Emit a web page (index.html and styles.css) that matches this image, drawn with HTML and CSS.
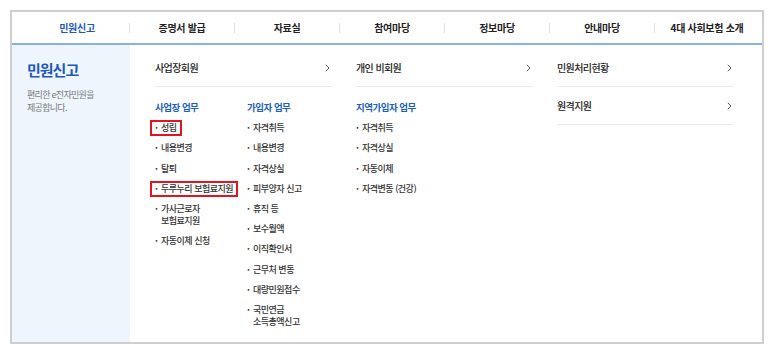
FILE: index.html
```html
<!DOCTYPE html>
<html lang="ko">
<head>
<meta charset="utf-8">
<title>민원신고</title>
<link rel="stylesheet" href="styles.css">
</head>
<body>
<div class="frame">
  <nav class="gnb">
    <a class="gnb-item active">민원신고</a><span class="sep"></span>
    <a class="gnb-item">증명서 발급</a><span class="sep"></span>
    <a class="gnb-item">자료실</a><span class="sep"></span>
    <a class="gnb-item">참여마당</a><span class="sep"></span>
    <a class="gnb-item">정보마당</a><span class="sep"></span>
    <a class="gnb-item">안내마당</a><span class="sep"></span>
    <a class="gnb-item">4대 사회보험 소개</a>
  </nav>
  <div class="content">
    <aside class="side">
      <h2 class="side-title">민원신고</h2>
      <p class="side-desc">편리한 e전자민원을<br>제공합니다.</p>
    </aside>
    <div class="main">
      <div class="col">
        <a class="row"><span>사업장회원</span><svg class="chev" viewBox="0 0 5 8" width="5" height="8"><polyline points="0.8,0.8 4,4 0.8,7.2" fill="none" stroke="#555" stroke-width="1"/></svg></a>
        <div class="subs">
          <div class="sub">
            <h3 class="sub-title">사업장 업무</h3>
            <ul class="list">
              <li><span class="hl"><span class="dot">·</span><span>성립</span></span></li>
              <li><span class="dot">·</span><span>내용변경</span></li>
              <li><span class="dot">·</span><span>탈퇴</span></li>
              <li><span class="hl"><span class="dot">·</span><span>두루누리 보험료지원</span></span></li>
              <li><span class="dot">·</span><span>가사근로자<br>보험료지원</span></li>
              <li><span class="dot">·</span><span>자동이체 신청</span></li>
            </ul>
          </div>
          <div class="sub">
            <h3 class="sub-title">가입자 업무</h3>
            <ul class="list">
              <li><span class="dot">·</span><span>자격취득</span></li>
              <li><span class="dot">·</span><span>내용변경</span></li>
              <li><span class="dot">·</span><span>자격상실</span></li>
              <li><span class="dot">·</span><span>피부양자 신고</span></li>
              <li><span class="dot">·</span><span>휴직 등</span></li>
              <li><span class="dot">·</span><span>보수월액</span></li>
              <li><span class="dot">·</span><span>이직확인서</span></li>
              <li><span class="dot">·</span><span>근무처 변동</span></li>
              <li><span class="dot">·</span><span>대량민원접수</span></li>
              <li><span class="dot">·</span><span>국민연금<br>소득총액신고</span></li>
            </ul>
          </div>
        </div>
      </div>
      <div class="col">
        <a class="row"><span>개인 비회원</span><svg class="chev" viewBox="0 0 5 8" width="5" height="8"><polyline points="0.8,0.8 4,4 0.8,7.2" fill="none" stroke="#555" stroke-width="1"/></svg></a>
        <div class="subs">
          <div class="sub">
            <h3 class="sub-title">지역가입자 업무</h3>
            <ul class="list">
              <li><span class="dot">·</span><span>자격취득</span></li>
              <li><span class="dot">·</span><span>자격상실</span></li>
              <li><span class="dot">·</span><span>자동이체</span></li>
              <li><span class="dot">·</span><span>자격변동 (건강)</span></li>
            </ul>
          </div>
        </div>
      </div>
      <div class="col">
        <a class="row"><span>민원처리현황</span><svg class="chev" viewBox="0 0 5 8" width="5" height="8"><polyline points="0.8,0.8 4,4 0.8,7.2" fill="none" stroke="#555" stroke-width="1"/></svg></a>
        <a class="row"><span>원격지원</span><svg class="chev" viewBox="0 0 5 8" width="5" height="8"><polyline points="0.8,0.8 4,4 0.8,7.2" fill="none" stroke="#555" stroke-width="1"/></svg></a>
      </div>
    </div>
  </div>
</div>
</body>
</html>
```
FILE: styles.css
```css
* { box-sizing: border-box; }
html, body { margin: 0; padding: 0; background: #fff; }
body {
  font-family: "Noto Sans CJK KR", "Noto Sans", sans-serif;
  color: #333;
}
.frame {
  margin: 10px;
  width: 754px;
  height: 334px;
  border: 2px solid #cfcfcf;
  display: flex;
  flex-direction: column;
}
.gnb {
  height: 33px;
  flex: none;
  display: flex;
  align-items: center;
  padding-left: 13px;
  border-bottom: 2px solid #86b4de;
}
.gnb-item {
  width: 104px;
  text-align: center;
  font-size: 10px;
  font-weight: 700;
  letter-spacing: -0.3px;
  color: #222;
  line-height: 14px;
}
.gnb-item.active { color: #1a58c2; }
.sep {
  width: 1px;
  height: 10px;
  background: #e2e2e2;
}
.content {
  flex: 1;
  display: flex;
  min-height: 0;
}
.side {
  width: 118px;
  flex: none;
  background: #eef5fc;
  padding: 15px 0 0 15px;
}
.side-title {
  margin: 0;
  font-size: 15px;
  line-height: 20px;
  font-weight: 700;
  letter-spacing: -1px;
  color: #1a58c2;
}
.side-desc {
  margin: 8px 0 0;
  font-size: 9px;
  line-height: 13px;
  letter-spacing: -0.7px;
  color: #7a7a7a;
}
.main {
  flex: 1;
  padding: 4px 0 0 25px;
  display: grid;
  grid-template-columns: 177px 177px 177px;
  column-gap: 24px;
  align-content: start;
}
.col { display: flex; flex-direction: column; }
.row {
  display: flex;
  align-items: center;
  justify-content: space-between;
  padding: 12px 2px 11px 0;
  line-height: 14px;
  font-size: 10px;
  font-weight: 500;
  letter-spacing: -0.6px;
  color: #222;
  border-bottom: 1px solid #ececec;
}
.chev { display: block; }
.subs {
  display: grid;
  grid-template-columns: 92px 1fr;
  padding-top: 13px;
}
.sub-title {
  margin: 0;
  font-size: 9.5px;
  line-height: 14px;
  font-weight: 700;
  letter-spacing: -0.5px;
  color: #1a5fc4;
}
.list {
  list-style: none;
  margin: 0;
  padding: 0;
  display: flex;
  flex-direction: column;
  align-items: flex-start;
}
.list li {
  display: flex;
  margin-top: 8.2px;
  font-size: 9px;
  line-height: 12px;
  font-weight: 500;
  letter-spacing: -0.5px;
  color: #333;
}
.dot {
  width: 6px;
  flex: none;
  font-weight: 700;
}
.hl {
  display: flex;
  padding: 0 3px;
  margin: 0 -3px;
  box-shadow: 0 0 0 2px #e3141b;
}
```
